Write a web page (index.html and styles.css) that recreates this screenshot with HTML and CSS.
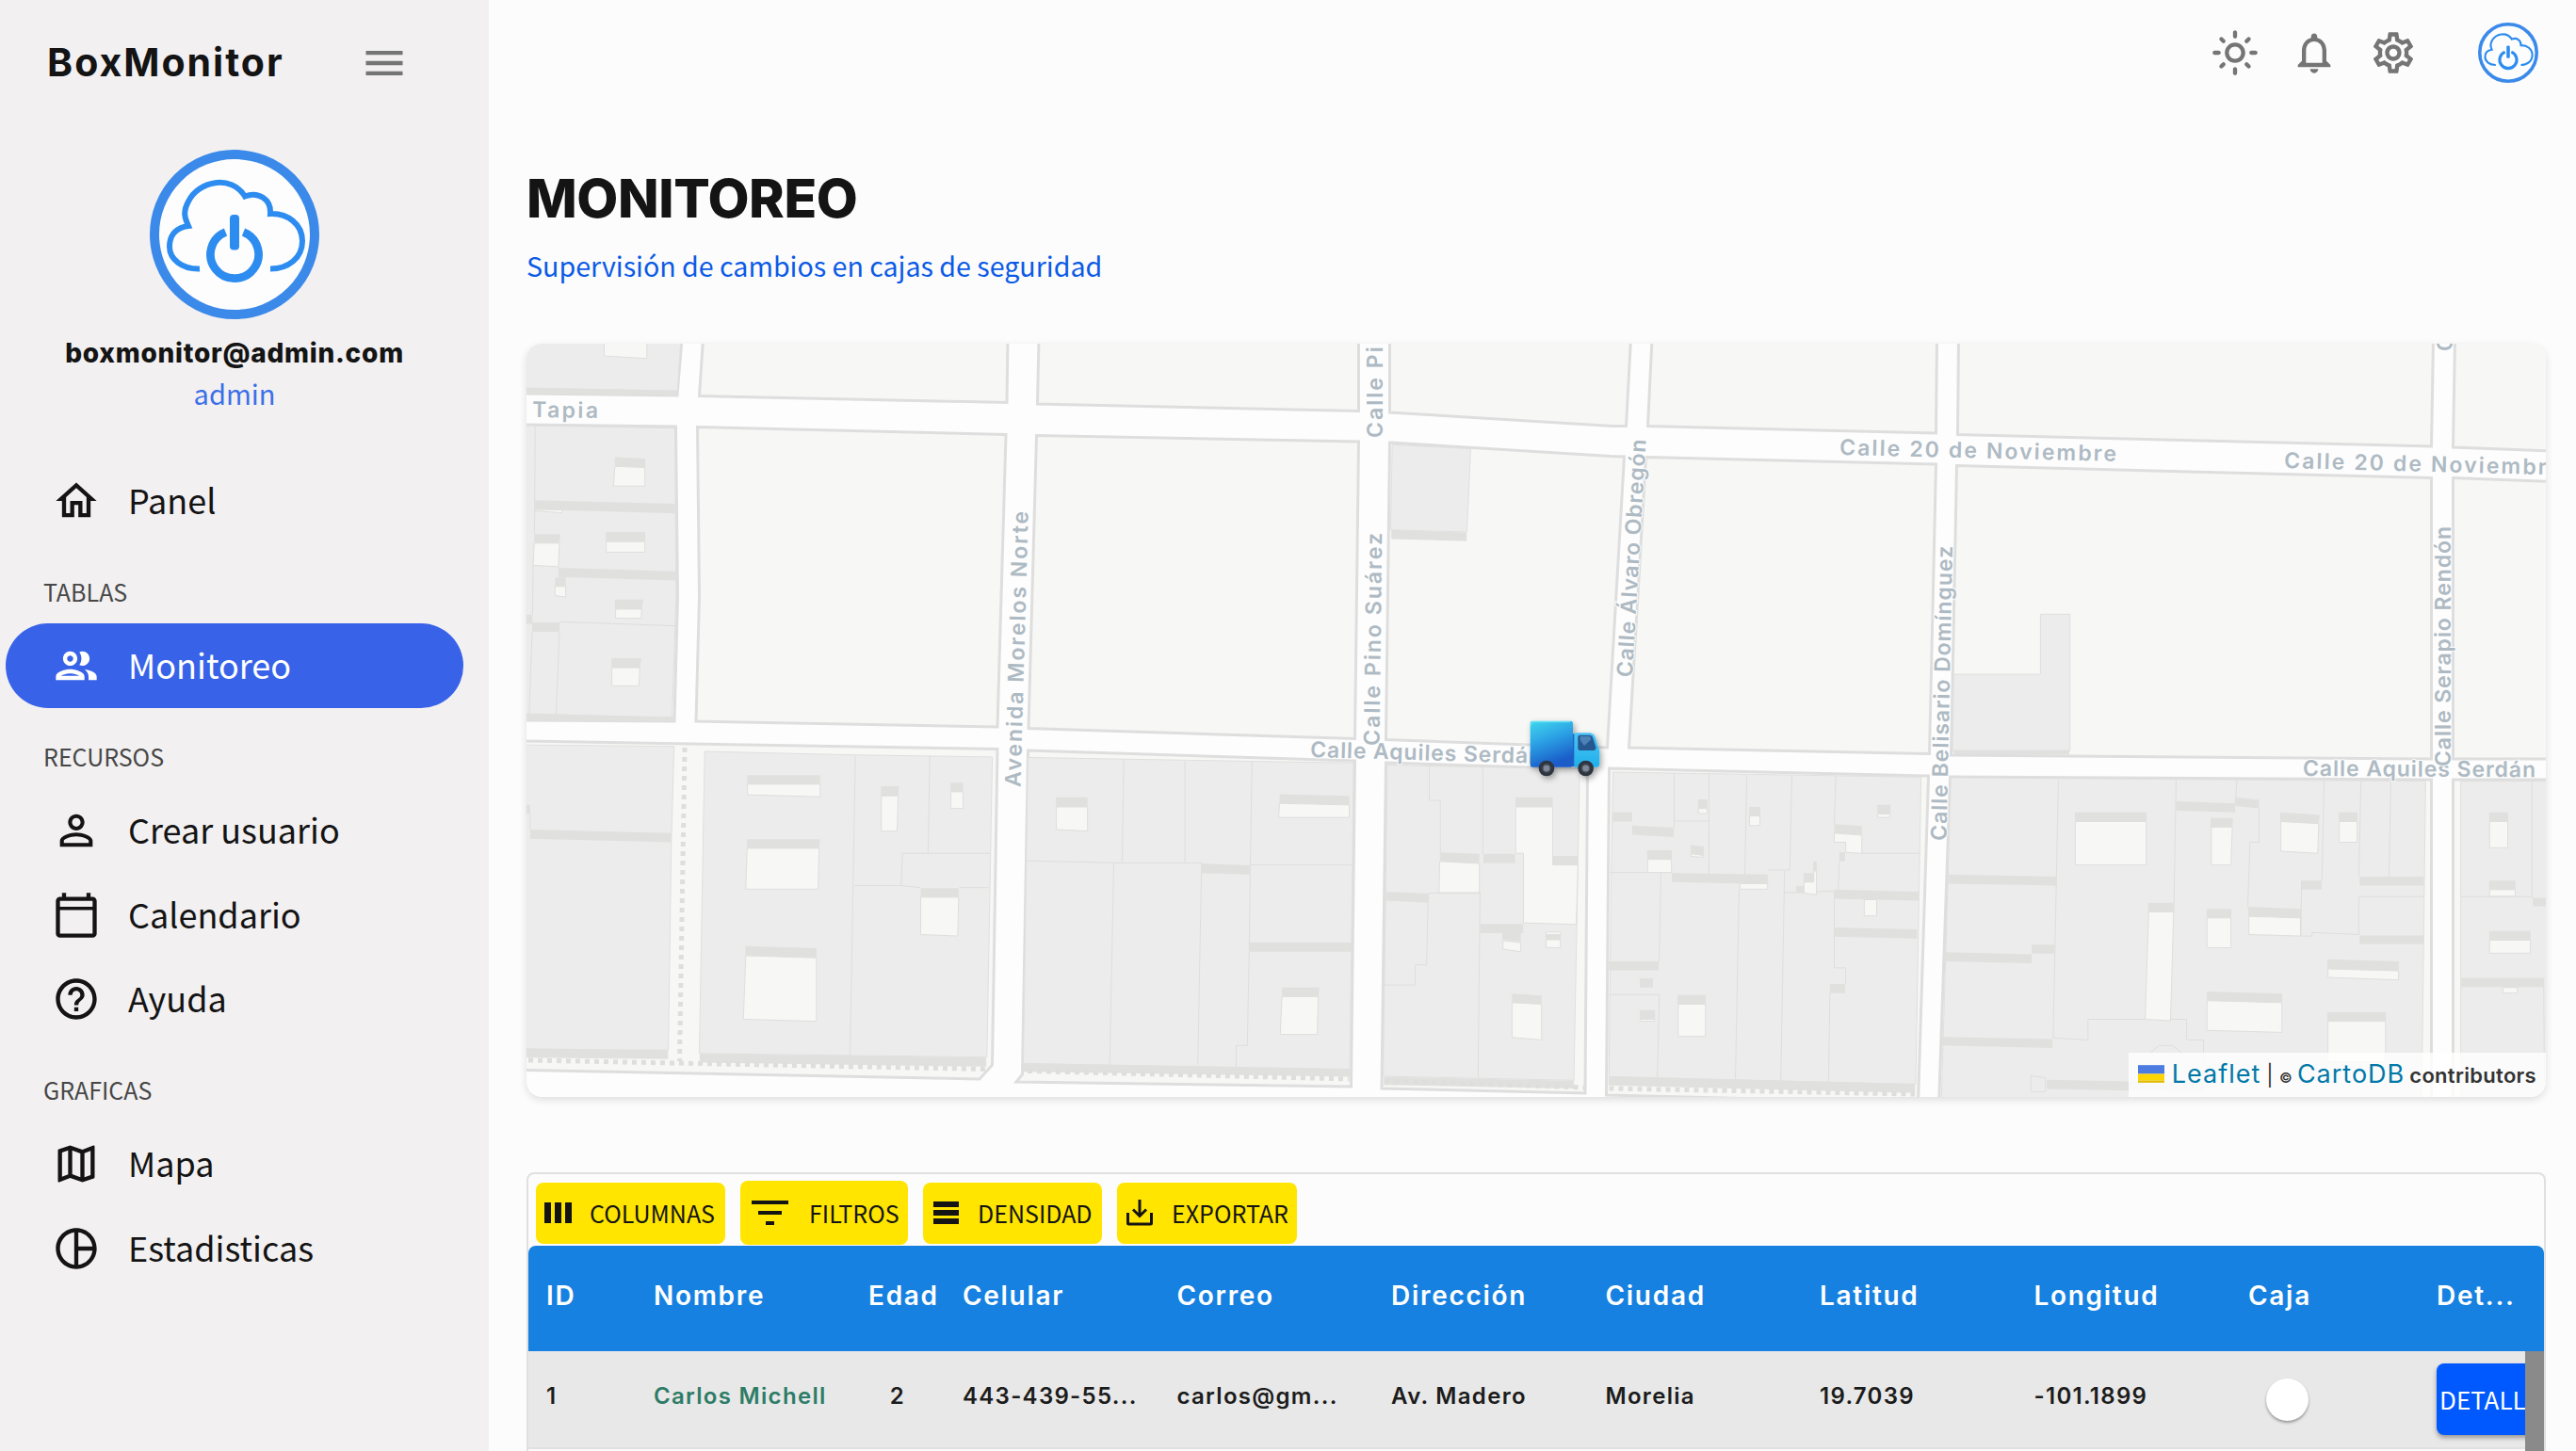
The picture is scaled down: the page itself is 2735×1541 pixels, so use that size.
FILE: index.html
```html
<!DOCTYPE html>
<html lang="es">
<head>
<meta charset="utf-8">
<title>BoxMonitor</title>
<link rel="stylesheet" href="styles.css">
</head>
<body>
<svg class="defs" width="0" height="0">
  <symbol id="cloud-power" viewBox="0 0 180 180">
    <path class="cloud" d="M53 126.5C34 127 21 116 21 103C21 90 29 82.500 41 81C37 72 35 66 41 55C52 33 86 26 101 49.500C115 44 129 52 128 68C146 67 162 79 162 97C162 115 147 126.500 128 126.500"/>
    <path class="power" d="M80.500 87.500A25.500 25.500 0 1 0 99.500 87.500"/>
    <rect class="power-bar" x="85" y="69" width="10" height="37.500" rx="4"/>
  </symbol>
</svg>
<div class="app">
  <aside class="sidebar">
    <div class="brand">
      <h1 class="brand-name">BoxMonitor</h1>
      <svg class="icon icon-muted" viewBox="0 0 24 24"><path d="M3 18h18v-2H3v2zm0-5h18v-2H3v2zm0-7v2h18V6H3z"/></svg>
    </div>
    <div class="profile">
      <svg class="avatar avatar-lg" viewBox="0 0 180 180"><circle cx="90" cy="90" r="85"/><use href="#cloud-power"/></svg>
      <div class="profile-mail">boxmonitor@admin.com</div>
      <div class="profile-role">admin</div>
    </div>
    <nav class="menu">
      <a class="item"><svg class="icon" viewBox="0 0 24 24"><path d="m12 5.690 5 4.500V18h-2v-6H9v6H7v-7.810l5-4.500M12 3 2 12h3v8h6v-6h2v6h6v-8h3L12 3z"/></svg><span>Panel</span></a>
      <h2 class="section">TABLAS</h2>
      <a class="item active"><svg class="icon" viewBox="0 0 24 24"><path d="M9 13.750c-2.340 0-7 1.170-7 3.500V19h14v-1.750c0-2.330-4.660-3.500-7-3.500zM4.340 17c.84-.58 2.870-1.250 4.660-1.250s3.820.67 4.660 1.250H4.340zM9 12c1.930 0 3.500-1.570 3.500-3.500S10.930 5 9 5 5.500 6.570 5.500 8.500 7.070 12 9 12zm0-5c.83 0 1.500.67 1.500 1.500S9.830 10 9 10s-1.500-.67-1.500-1.500S8.170 7 9 7zm7.040 6.810c1.160.84 1.960 1.960 1.960 3.440V19h4v-1.750c0-2.020-3.500-3.170-5.960-3.440zM15 12c1.930 0 3.500-1.570 3.500-3.500S16.930 5 15 5c-.54 0-1.040.13-1.500.35.630.89 1 1.980 1 3.150s-.37 2.260-1 3.150c.46.22.96.35 1.500.35z"/></svg><span>Monitoreo</span></a>
      <h2 class="section">RECURSOS</h2>
      <a class="item"><svg class="icon" viewBox="0 0 24 24"><path d="M12 5.900c1.160 0 2.100.94 2.100 2.100s-.94 2.100-2.100 2.100S9.900 9.160 9.900 8s.94-2.100 2.100-2.100m0 9c2.970 0 6.100 1.460 6.100 2.100v1.100H5.900V17c0-.64 3.130-2.100 6.100-2.100M12 4C9.790 4 8 5.790 8 8s1.790 4 4 4 4-1.790 4-4-1.790-4-4-4zm0 9c-2.670 0-8 1.340-8 4v3h16v-3c0-2.660-5.330-4-8-4z"/></svg><span>Crear usuario</span></a>
      <a class="item"><svg class="icon" viewBox="0 0 24 24"><path d="M20 3h-1V1h-2v2H7V1H5v2H4c-1.100 0-2 .9-2 2v16c0 1.100.9 2 2 2h16c1.100 0 2-.9 2-2V5c0-1.100-.9-2-2-2zm0 18H4V9.500h16V21zm0-13.200H4V5h16v2.800z"/></svg><span>Calendario</span></a>
      <a class="item"><svg class="icon" viewBox="0 0 24 24"><path d="M11 18h2v-2h-2v2zm1-16C6.480 2 2 6.480 2 12s4.480 10 10 10 10-4.480 10-10S17.520 2 12 2zm0 18c-4.410 0-8-3.590-8-8s3.590-8 8-8 8 3.590 8 8-3.590 8-8 8zm0-14c-2.210 0-4 1.790-4 4h2c0-1.100.9-2 2-2s2 .9 2 2c0 2-3 1.750-3 5h2c0-2.250 3-2.500 3-5 0-2.210-1.790-4-4-4z"/></svg><span>Ayuda</span></a>
      <h2 class="section">GRAFICAS</h2>
      <a class="item"><svg class="icon" viewBox="0 0 24 24"><path d="m20.500 3-.16.030L15 5.100 9 3 3.360 4.900c-.21.070-.36.250-.36.480V20.500c0 .28.220.5.500.5l.16-.03L9 18.900l6 2.100 5.640-1.900c.21-.07.36-.25.36-.48V3.500c0-.28-.22-.5-.5-.5zM10 5.470l4 1.400v11.660l-4-1.400V5.470zm-5 .99 3-1.010v11.700l-3 1.160V6.460zm14 11.080-3 1.010V6.860l3-1.160v11.840z"/></svg><span>Mapa</span></a>
      <a class="item"><svg class="icon" viewBox="0 0 24 24"><path d="M12 2C6.480 2 2 6.480 2 12s4.480 10 10 10 10-4.480 10-10S17.520 2 12 2zm1 2.070c3.610.45 6.480 3.330 6.930 6.930H13V4.070zM4 12c0-4.060 3.070-7.440 7-7.930v15.870c-3.930-.5-7-3.880-7-7.940zm9 7.930V13h6.930c-.45 3.610-3.320 6.480-6.930 6.930z"/></svg><span>Estadisticas</span></a>
    </nav>
  </aside>
  <main class="content">
    <header class="topbar">
      <svg class="icon icon-muted" viewBox="0 0 24 24"><path d="M12 9c1.650 0 3 1.350 3 3s-1.350 3-3 3-3-1.350-3-3 1.350-3 3-3m0-2c-2.760 0-5 2.240-5 5s2.240 5 5 5 5-2.240 5-5-2.240-5-5-5zM2 13h2c.55 0 1-.45 1-1s-.45-1-1-1H2c-.55 0-1 .45-1 1s.45 1 1 1zm18 0h2c.55 0 1-.45 1-1s-.45-1-1-1h-2c-.55 0-1 .45-1 1s.45 1 1 1zM11 2v2c0 .55.450 1 1 1s1-.45 1-1V2c0-.55-.45-1-1-1s-1 .45-1 1zm0 18v2c0 .55.450 1 1 1s1-.45 1-1v-2c0-.55-.45-1-1-1s-1 .45-1 1zM5.990 4.580c-.39-.39-1.030-.39-1.410 0-.39.390-.39 1.030 0 1.410l1.060 1.060c.39.390 1.030.390 1.410 0s.390-1.030 0-1.410L5.990 4.580zm12.370 12.370c-.39-.39-1.030-.39-1.410 0-.39.390-.39 1.030 0 1.410l1.060 1.060c.39.390 1.030.390 1.410 0 .390-.39.390-1.030 0-1.410l-1.060-1.060zm1.060-10.960c.390-.39.390-1.030 0-1.410-.39-.39-1.030-.39-1.410 0l-1.060 1.060c-.39.390-.39 1.030 0 1.410s1.030.390 1.410 0l1.060-1.060zM7.050 18.360c.390-.39.390-1.030 0-1.410-.39-.39-1.030-.39-1.410 0l-1.060 1.060c-.39.390-.39 1.030 0 1.410s1.030.390 1.410 0l1.060-1.060z"/></svg>
      <svg class="icon icon-muted" viewBox="0 0 24 24"><path d="M12 22c1.100 0 2-.9 2-2h-4c0 1.100.9 2 2 2zm6-6v-5c0-3.070-1.630-5.640-4.500-6.320V4c0-.83-.67-1.500-1.500-1.500s-1.500.67-1.500 1.500v.68C7.640 5.360 6 7.920 6 11v5l-2 2v1h16v-1l-2-2zm-2 1H8v-6c0-2.480 1.510-4.500 4-4.500s4 2.020 4 4.500v6z"/></svg>
      <svg class="icon icon-muted" viewBox="0 0 24 24"><path d="M19.430 12.980c.04-.32.070-.64.070-.98 0-.34-.03-.66-.07-.98l2.110-1.650c.19-.15.240-.42.120-.64l-2-3.460c-.09-.16-.26-.25-.44-.25-.06 0-.12.010-.17.030l-2.490 1c-.52-.4-1.080-.73-1.690-.98l-.38-2.650C14.460 2.180 14.250 2 14 2h-4c-.25 0-.46.180-.49.420l-.38 2.650c-.61.250-1.170.590-1.690.980l-2.490-1c-.06-.02-.12-.03-.18-.03-.17 0-.34.090-.43.250l-2 3.460c-.13.220-.07.490.120.640l2.110 1.650c-.04.320-.07.650-.07.980 0 .330.030.660.070.980l-2.110 1.650c-.19.150-.24.420-.12.640l2 3.460c.09.160.260.250.440.250.06 0 .12-.01.170-.03l2.490-1c.52.400 1.080.730 1.690.980l.38 2.650c.03.240.240.420.490.420h4c.25 0 .46-.18.490-.42l.38-2.650c.61-.25 1.170-.59 1.690-.98l2.490 1c.06.020.12.030.180.030.17 0 .34-.09.430-.25l2-3.460c.12-.22.070-.49-.12-.64l-2.110-1.650zm-1.980-1.710c.04.310.050.520.050.730 0 .21-.02.430-.05.730l-.14 1.130.89.700 1.080.840-.7 1.210-1.270-.51-1.040-.42-.9.680c-.43.320-.84.560-1.250.730l-1.060.430-.16 1.130-.2 1.350h-1.400l-.19-1.350-.16-1.130-1.060-.43c-.43-.18-.83-.41-1.230-.71l-.91-.7-1.060.430-1.270.510-.7-1.210 1.080-.84.890-.7-.14-1.130c-.03-.31-.05-.54-.05-.74s.02-.43.050-.73l.14-1.130-.89-.7-1.080-.84.700-1.210 1.270.510 1.040.420.900-.68c.43-.32.840-.56 1.250-.73l1.060-.43.160-1.130.2-1.350h1.390l.19 1.350.16 1.130 1.060.430c.43.180.830.410 1.230.710l.910.700 1.060-.43 1.270-.51.700 1.210-1.070.850-.89.700.140 1.130zM12 8c-2.210 0-4 1.790-4 4s1.790 4 4 4 4-1.790 4-4-1.790-4-4-4zm0 6c-1.100 0-2-.9-2-2s.9-2 2-2 2 .9 2 2-.9 2-2 2z"/></svg>
      <svg class="avatar avatar-sm" viewBox="0 0 180 180"><circle cx="90" cy="90" r="85"/><use href="#cloud-power"/></svg>
    </header>
    <h2 class="title">MONITOREO</h2>
    <p class="subtitle">Supervisión de cambios en cajas de seguridad</p>

    <section class="map">
      <svg class="map-canvas" viewBox="0 0 2144 800">
        <defs>
          <linearGradient id="box" x1="0" y1="0" x2=".35" y2="1"><stop offset="0" stop-color="#3fd8ef"/><stop offset=".5" stop-color="#2b9fe4"/><stop offset="1" stop-color="#1a5cc8"/></linearGradient>
          <linearGradient id="cab" x1="0" y1="0" x2="0" y2="1"><stop offset="0" stop-color="#4cc4f5"/><stop offset="1" stop-color="#1fb0ea"/></linearGradient>
          <filter id="soft" x="-30%" y="-30%" width="170%" height="170%"><feDropShadow dx="6" dy="9" stdDeviation="9" flood-opacity=".35"/></filter>
        </defs>
        <g class="block">
          <path d="M-5 -5H165L160 55L-5 53Z"/>
          <path d="M187.500 -5L183.500 55.500L510 62.500L511 -5Z"/>
          <path d="M544 -5L542.500 64L883.500 71.500V-5Z"/>
          <path d="M916.500 -5V73L1153 87.500H1167.500L1172.500 -5Z"/>
          <path d="M1195 -5L1190.500 87.500L1496.500 95L1497.500 -5Z"/>
          <path d="M1520.500 -5L1519.500 96.500L2022.500 109L2024.500 -5Z"/>
          <path d="M2047.500 -5L2045.500 110L2150 114V-5Z"/>
          <path d="M-5 86L158.500 88L160.500 268.500L157 401L-5 400Z"/>
          <path d="M181.500 88.500L509 96.500L500 407L180 401L183.500 268.500Z"/>
          <path d="M541.500 97.500L883.500 104L879.500 419.500L533 408.500Z"/>
          <path d="M916.500 105L1151 119.500L1165.500 120L1147.500 429L912.500 420.500Z"/>
          <path d="M1188.500 120.500L1496.500 128L1489.500 435.500L1170.500 429Z"/>
          <path d="M1518.500 129.500L2022.500 142.500V441L1512.500 437Z"/>
          <path d="M2045.500 142.500L2150 146.500V441H2045.500Z"/>
          <path d="M-5 422L500 430.500L494.500 766L481 781L-5 771.500Z"/>
          <path d="M532.500 432L879.500 443L875.500 789L520 784L526.500 776Z"/>
          <path d="M912.500 445L1126.500 452L1124 796L908 791Z"/>
          <path d="M1149.500 451L1488.500 459L1477.500 806L1146.500 798Z"/>
          <path d="M1511.500 460L2022.500 463V810H1499.500Z"/>
          <path d="M2045.500 463H2150V810H2045.500Z"/>
        </g>
        <g class="sector" transform="translate(-29 -25) scale(.35714 .53571)">
          <path class="building" d="M60 30H541L530 140L60 135Z M60 209L522 214L526 548L514 788L60 780Z M60 842L520 845L512 1030L503 1447H60Z M611 855L1059 862L1466 866L1450 1461L595 1454Z"/>
          <path class="edge" d="M107 209L105 424M101 486L99 584M98 618L89 780M179 618L169 788M181 598L524 606M92 979V1010M1059 862L1043 1457M1280 864L1275 1057M1056 1121H1195L1253 1125M1195 1121L1199 1057H1460M1367 1125H1455"/>
          <path class="yard" d="M312 40H439V76L312 71Z M344 290L433 292V329H340Z M318 439H433V460H318Z M104 442H179L176 489L101 486Z M166 528H198V549L166 546Z M346 573H424L422 591H346Z M335 689H418L416 725H335Z M106 375L187 376V382L106 378Z M738 920H954V945L738 941Z M737 1047H951L948 1128H733Z M733 1260L943 1264V1390L726 1386Z M1136 943H1186L1183 1013H1136Z M1343 935H1379V968H1343Z M1253 1144H1366L1363 1221L1253 1218Z"/>
          <path class="shade" d="M60 133L528 140V150L60 146Z M344 271L434 275V292L344 290Z M106 357L525 364V383L106 375Z M317 420H434V439H317Z M104 424H182L179 442H104Z M176 491L526 498V516L176 509Z M166 510H198V528H166Z M344 554H428L424 573H344Z M334 670H423L418 689H334Z M60 584H99V602H60Z M98 599H181L179 618H98Z M60 780L521 787V795L60 794Z M92 1010L512 1017V1035L92 1028Z M60 961H92V979H60Z M60 1443L502 1447V1465L60 1462Z M596 1454L1448 1462V1480L596 1472Z M737 902H954V920H737Z M737 1029H954L951 1047H737Z M732 1241L943 1245V1264L732 1260Z M1135 924H1189L1186 943H1135Z M1342 917H1379V935H1342Z M1253 1126H1366V1144H1253Z"/>
        </g>
        <g class="sector" transform="translate(511 -25) scale(.35714 .53571)">
          <path class="building" d="M60 867L1028 878L1017 1485L46 1474Z M1143 247L1376 255L1365 420L1138 416Z M1128 882L1700 890L1683 1507L1116 1499Z"/>
          <path class="edge" d="M345 870L340 1076M527 874V1076M726 876L721 1080L718 1236L712 1438H679V1480M58 1072L340 1076H576L565 1476M721 1080H1024M315 1076L303 1476M1253 883V952H1286V1056M1412 884V1058M1404 1135L1398 1502M1120 1318H1211V1278H1245L1250 1136H1404"/>
          <path class="yard" d="M144 965H237V1013L144 1010Z M808 958L1015 961V986H805Z M815 1341H923L920 1416H810Z M1510 965H1620V1080H1695L1690 1198L1533 1195V1057H1510Z M1284 1073L1402 1077V1135H1282Z M1472 1230L1525 1234V1252L1472 1247Z M1499 1353L1587 1356V1427L1499 1422Z M1600 1213H1643V1244H1600Z"/>
          <path class="shade" d="M46 1473L1017 1485V1500L46 1490Z M575 1077L719 1081V1099L575 1096Z M719 1234H1023V1252H719Z M143 946H237V965H143Z M808 940L1015 943V961L808 958Z M815 1323H926L923 1341H815Z M1140 416L1364 421V438L1140 434Z M1509 946H1620V965H1509Z M1620 1062H1694V1080H1620Z M1285 1055L1402 1058V1077L1285 1073Z M1414 1058H1508V1076H1414Z M1124 1133L1250 1137V1155L1124 1151Z M1405 1197H1532V1215H1405Z M1470 1212H1525V1232L1470 1228Z M1499 1335L1587 1339V1356L1499 1353Z M1600 1217H1643V1229H1600Z M1118 1500L1683 1508V1523L1118 1516Z"/>
        </g>
        <g class="sector" transform="translate(1051 -25) scale(.35714 .53571)">
          <path class="building" d="M287 896L1203 906L1187 1515L275 1500L282 1095Z"/>
          <path class="edge" d="M469 898V1005M573 898L572 1098M469 993H572M685 902L679 1100M819 903L813 1090H747M950 904L945 1000M278 1095H390M430 1095L424 1272M662 1128L651 1506M797 1092L796 1135L786 1507M796 1135L945 1132V1284H979V1316M932 1334L928 1510M275 1337H425L419 1502M1027 1057H1197M960 1073L957 1130"/>
          <path class="yard" d="M541 968H567V978H541Z M693 983H724V1002H693Z M390 1069H461V1095H390Z M519 1058L557 1061V1065L519 1063Z M665 1117H747V1128H665Z M945 1017L1027 1021V1057L979 1055V1035H945Z M1074 979H1111V986H1074Z M1034 1149H1071V1181H1034Z M855 1114H884V1092H892V1139L855 1136Z M368 1386H411V1390H368Z M481 1356H562V1420H481Z"/>
          <path class="shade" d="M287 976H344V994H287Z M344 1002L468 1006V1025L344 1020Z M540 950H568V968H540Z M692 965H725V983H692Z M389 1051H462V1069H389Z M518 1040L557 1044V1061L518 1057Z M462 1096L747 1099V1118L462 1114Z M882 1073H893V1092H882V1114H854V1096H882Z M832 1122H855V1136H832Z M945 999L1027 1003V1020L945 1017Z M1073 961H1112V979H1073Z M960 1055H977V1073H960Z M945 1129L1197 1133V1151L945 1147Z M945 1204L1191 1208V1226L945 1222Z M932 1316H977V1334H932Z M275 1271H423V1289H275Z M367 1305H406V1323H367Z M367 1368H412V1386H367Z M479 1338H563V1356H479Z M274 1499L1185 1514V1532L274 1517Z"/>
        </g>
        <g class="sector" transform="translate(1591 -25) scale(.37309 .53571)">
          <path class="building" d="M-203 702H44V583H128V854H-206Z M-211 907L1140 914L1128 1600H-240Z M1240 914H1500V1600H1240Z"/>
          <path class="edge" d="M95 912L80 1423L179 1427V1386H460V1427H508V1600M430 912L424 1155M603 912L598 958M666 968V1035H640L634 1163M787 1111L785 1221H817V1214L950 1218V1143H1135M851 912L845 1111M956 914L950 1103M1041 914L1036 1103M17 1498L58 1502V1530H17ZM350 1455L382 1438H420L450 1455M1443 914V1145M1240 1143H1443M1476 1304L1479 1600"/>
          <path class="yard" d="M143 994H345V1080H143Z M530 1005H590L586 1080H530Z M728 994L836 998L833 1057L728 1053Z M894 994H945V1035H894Z M352 1173H423L414 1389L342 1386Z M518 1185H586V1244H518Z M637 1182L784 1185V1221L637 1218Z M862 1286L1063 1290V1308L862 1303Z M518 1349L731 1353V1412L518 1408Z M862 1390H1026V1470H862Z M1322 994H1374V1046H1322Z M1322 1129H1395V1142H1322Z M1322 1229H1438V1255H1322Z M1360 1323H1401V1334H1360Z"/>
          <path class="shade" d="M-204 852H126V861H-204Z M-219 1099L90 1103V1121L-219 1117Z M-227 1253L19 1257V1275L-227 1271Z M19 1238H83V1256H19Z M-236 1421L78 1425V1443L-236 1438Z M142 976H346V994H142Z M351 1155H425V1173H351Z M430 954L598 958V976L430 972Z M599 946L666 951V968L599 963Z M528 987H592L590 1005H528Z M726 976L839 981L836 998L726 994Z M893 976H946V994H893Z M952 1103H1135V1121H952Z M952 1220H1135V1237H952Z M787 1111H844V1129H787Z M635 1163L785 1167V1185L635 1181Z M517 1167H587V1185H517Z M860 1267L1064 1271V1290L860 1286Z M517 1331L732 1335V1353L517 1349Z M860 1372H1027V1390H860Z M62 1506L508 1512V1530L62 1524Z M1321 976H1375V994H1321Z M1321 1111H1396V1129H1321Z M1445 1145H1500V1162H1445Z M1321 1211H1439V1229H1321Z M1240 1304H1476V1322H1240Z"/>
        </g>
        <path class="footway" d="M168 429L162.500 762M2 761L489 770.500M532 772.500L873.500 781M911.500 783L1124 790M1149.500 791L1474 797"/>
        <g class="label">
          <text transform="translate(6 78) rotate(.8)" textLength="70">Tapia</text>
          <text transform="translate(1394 118) rotate(1.350)" textLength="294">Calle 20 de Noviembre</text>
          <text transform="translate(1866 132) rotate(1.450)" textLength="294">Calle 20 de Noviembre</text>
          <text transform="translate(832 439) rotate(1.600)" textLength="246">Calle Aquiles Serdán</text>
          <text transform="translate(1886 459) rotate(.3)" textLength="247">Calle Aquiles Serdán</text>
          <text transform="translate(524.500 471) rotate(-88.400)" textLength="293">Avenida Morelos Norte</text>
          <text transform="translate(909 100) rotate(-90)" textLength="226">Calle Pino Suárez</text>
          <text transform="translate(905.500 427) rotate(-89.300)" textLength="226">Calle Pino Suárez</text>
          <text transform="translate(1174 354.500) rotate(-86.700)" textLength="253">Calle Álvaro Obregón</text>
          <text transform="translate(1507.500 528) rotate(-88.800)" textLength="313">Calle Belisario Domínguez</text>
          <text transform="translate(2043 449) rotate(-90)" textLength="255">Calle Serapio Rendón</text>
          <text transform="translate(2045 8) rotate(-90)" textLength="255">Calle Serapio Rendón</text>
        </g>
        <g transform="translate(1051 385) scale(.3333)" filter="url(#soft)">
          <path fill="#1d62c4" d="M170 88h20v104h-20z"/>
          <rect x="44" y="47" width="136" height="147" rx="8" fill="url(#box)"/>
          <path fill="none" stroke="#6fe9f7" stroke-width="3" d="M47 60Q47 50 54 50H172"/>
          <path fill="url(#cab)" d="M184 85H234Q246 86 251 98L263 137Q265 141 265 148V184Q265 194 255 194H184Z"/>
          <path fill="#27588f" d="M201 92H233Q240 92 243 99L253 130Q255 140 246 141H204Q196 141 196 134V98Q196 92 201 92Z"/>
          <path fill="#5d95c9" d="M203 96H234L238 106L216 126L203 108Z" opacity=".7"/>
          <g fill="#2f3640"><circle cx="96" cy="198" r="25"/><circle cx="221" cy="198" r="25"/></g>
          <g fill="#7e8896" stroke="#4c5460" stroke-width="4"><circle cx="96" cy="198" r="12"/><circle cx="221" cy="198" r="12"/></g>
        </g>
      </svg>
      <div class="attribution">
        <svg class="flag" viewBox="0 0 12 8"><path fill="#4c7be1" d="M0 0h12v4H0z"/><path fill="#ffd500" d="M0 4h12v3H0z"/><path fill="#e0bc00" d="M0 7h12v1H0z"/></svg>
        <a class="credit">Leaflet</a><span class="bar">|</span><span class="copy">©</span><a class="credit">CartoDB</a><span class="contrib">contributors</span>
      </div>
    </section>

    <section class="grid">
      <div class="toolbar">
        <button class="tool tool-columns"><svg viewBox="0 0 29 22"><path d="M0 0h7v22H0zM11 0h7v22h-7zM22 0h7v22h-7z"/></svg><span>COLUMNAS</span></button>
        <button class="tool tool-filter"><svg viewBox="0 0 39 26"><path d="M0 0h39v4H0zM7 11h25v4H7zM15 22h9v4h-9z"/></svg><span>FILTROS</span></button>
        <button class="tool tool-density"><svg viewBox="0 0 27 24"><path d="M0 0h27v6H0zM0 9h27v6H0zM0 18h27v6H0z"/></svg><span>DENSIDAD</span></button>
        <button class="tool tool-export"><svg viewBox="0 0 28 28"><path d="M12.500 0h3v14l4.500-4.500 2 2-8 8-8-8 2-2 4.500 4.500zM0 14h3v10.500h22V14h3v11a2.500 2.500 0 0 1-2.500 2.500h-23A2.500 2.500 0 0 1 0 25z"/></svg><span>EXPORTAR</span></button>
      </div>
      <div class="row head">
        <div>ID</div><div>Nombre</div><div>Edad</div><div>Celular</div><div>Correo</div><div>Dirección</div><div>Ciudad</div><div>Latitud</div><div>Longitud</div><div>Caja</div><div>Det...</div>
      </div>
      <div class="body">
        <div class="row entry">
          <div>1</div><div class="name">Carlos Michell</div><div class="center">2</div><div>443-439-55...</div><div>carlos@gm...</div><div>Av. Madero</div><div>Morelia</div><div>19.7039</div><div>-101.1899</div><div class="toggle"><i class="knob"></i></div><div class="action"><button class="detail">DETALLES</button></div>
        </div>
        <div class="scrollbar"></div>
      </div>
    </section>
  </main>
</div>
</body>
</html>
```
FILE: styles.css
```css
* { box-sizing: border-box; }
body { margin: 0; background: #fcfcfc; color: #141414; font-family: "Noto Sans CJK JP", "Noto Sans", sans-serif; }
h1, h2, p { margin: 0; font-weight: 400; }
.defs { position: absolute; }
.app { display: flex; width: 2735px; height: 1541px; overflow: hidden; }

.sidebar { width: 519px; flex: none; background: #f2f0f1; }
.brand { display: flex; align-items: center; justify-content: space-between; height: 134px; padding: 0 85px 0 50px; }
.brand-name { padding-bottom: 3px; font: 700 41px/50px Inter, sans-serif; letter-spacing: 2px; }
.icon { width: 52px; height: 52px; flex: none; fill: currentColor; }
.icon-muted { color: #757575; }

.profile { display: flex; flex-direction: column; align-items: center; padding: 25px 21px 0 0; }
.avatar { display: block; flex: none; }
.avatar circle { fill: #fdfdfd; stroke: #3b8aea; stroke-width: 10; }
.avatar-lg { width: 180px; height: 180px; }
.avatar-sm { width: 64px; height: 64px; }
.cloud { fill: none; stroke: #2d8cf0; stroke-width: 6; }
.power { fill: none; stroke: #2d8cf0; stroke-width: 8.700; }
.power-bar { fill: #2d8cf0; }
.profile-mail { margin-top: 16px; font: 800 28px/40px Inter, sans-serif; letter-spacing: .75px; }
.profile-role { margin-top: 2px; font-size: 29px; line-height: 40px; color: #3a6fe8; }

.menu { padding-top: 50px; }
.item { display: flex; align-items: center; gap: 29px; width: 486px; height: 89.700px; margin-left: 6px; padding-left: 49px; font-size: 36px; border-radius: 45px; }
.item span { line-height: 50px; padding-bottom: 4px; }
.item.active { background: #3863e8; color: #fff; }
.section { height: 85.300px; padding: 31px 0 0 46px; font-size: 25px; line-height: 40px; color: #474747; }

.content { flex: 1; min-width: 0; padding: 0 32px 0 40px; }
.topbar { display: flex; align-items: center; justify-content: flex-end; gap: 32px; height: 112px; padding-right: 8px; }
.topbar .avatar { margin-left: 32px; }
.title { margin-top: 64px; font: 800 57px/70px Inter, sans-serif; letter-spacing: -.4px; }
.subtitle { margin-top: 16px; font-size: 28.600px; line-height: 40px; color: #0a5ae6; }

.map { position: relative; height: 800px; margin-top: 63px; overflow: hidden; border-radius: 16px; background: #fdfdfd; box-shadow: 0 3px 8px rgba(0, 0, 0, .12); }
.map-canvas { display: block; width: 2144px; height: 800px; }
.block { fill: #f7f7f5; stroke: #dedede; stroke-width: 3; }
.sector path { vector-effect: non-scaling-stroke; }
.building { fill: #ececec; stroke: #dfdfde; stroke-width: 1; }
.edge { fill: none; stroke: #dededd; stroke-width: 1; }
.yard { fill: #f7f7f5; stroke: #dededd; stroke-width: 1; }
.shade { fill: #e0e0de; }
.footway { fill: none; stroke: #dededd; stroke-width: 5; stroke-dasharray: 5 5; }
.label { font: 600 23px Inter, sans-serif; fill: #aebac3; stroke: #fdfdfd; stroke-width: 2; paint-order: stroke; }
.attribution { position: absolute; right: 0; bottom: 0; display: flex; align-items: baseline; height: 47px; padding: 7px 10px 0; background: rgba(255, 255, 255, .8); font: 600 22px/32px Inter, sans-serif; letter-spacing: .3px; color: #333; }
.flag { width: 28px; height: 19px; margin-right: 8px; }
.credit { font-size: 27px; font-weight: 400; letter-spacing: 1px; color: #0078a8; }
.bar { font-weight: 400; margin: 0 6px; }
.copy { font-size: 15px; margin-right: 5px; }
.contrib { margin-left: 5px; }

.grid { height: 700px; margin-top: 80px; border: 2px solid #e0e0e0; border-radius: 8px; }
.toolbar { display: flex; align-items: center; gap: 16px; height: 76px; padding: 8px 8px 2px; }
.tool { display: flex; align-items: center; height: 65px; padding: 0; border: 0; border-radius: 8px; background: #ffe500; font: 400 25px/40px "Noto Sans CJK JP", sans-serif; color: #141414; }
.tool svg { flex: none; fill: #141414; }
.tool-columns { width: 201px; padding-left: 9px; }
.tool-columns svg { width: 29px; margin-right: 19px; }
.tool-filter { width: 178px; height: 68px; padding-left: 12px; }
.tool-filter svg { width: 39px; margin-right: 22px; }
.tool-density { width: 190px; padding-left: 11px; }
.tool-density svg { width: 27px; margin-right: 20px; }
.tool-export { width: 191px; padding-left: 10px; }
.tool-export svg { width: 28px; margin-right: 20px; }
.row { display: grid; grid-template-columns: 114px 228px 100px repeat(6, 227.500px) 200px minmax(0, 1fr); align-items: center; }
.row > div { padding-left: 19px; white-space: nowrap; }
.head { height: 112px; padding-bottom: 6px; border-radius: 8px 8px 0 0; background: #1681e0; color: #fff; font: 600 28px/40px Inter, sans-serif; letter-spacing: 1.700px; }
.body { display: flex; height: 400px; }
.entry { flex: 1; min-width: 0; height: 104px; overflow: hidden; border-bottom: 2px solid #e0e0e0; background: #e8e8e8; color: #1c1c1c; font: 600 24px/34px Inter, sans-serif; letter-spacing: 1.300px; }
.entry > div { padding-bottom: 7px; }
.name { color: #2e7c67; }
.row > .center { padding-left: 0; text-align: center; }
.row > .toggle { padding: 0 0 0 38px; }
.row > .action { padding-bottom: 0; }
.knob { display: block; width: 45px; height: 45px; border-radius: 50%; background: #fff; box-shadow: 0 2px 3px rgba(0, 0, 0, .35); }
.detail { display: block; height: 76px; padding: 0 3px; border: 0; border-radius: 8px; background: #0059ff; color: #fff; font: 400 26px/40px "Noto Sans CJK JP", sans-serif; box-shadow: 0 3px 5px rgba(0, 0, 0, .35); }
.scrollbar { width: 20px; background: #8a8a8a; }
```
